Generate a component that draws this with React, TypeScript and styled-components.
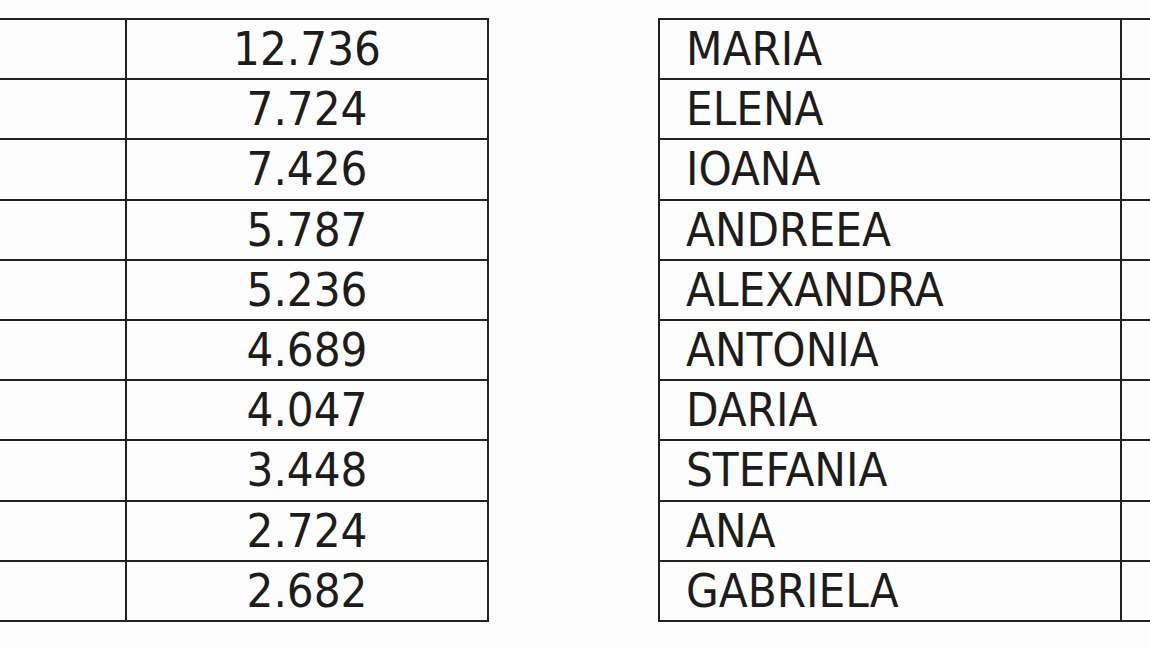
import { createGlobalStyle } from "styled-components";
import styled from "styled-components";

const GlobalStyle = createGlobalStyle`
  html, body {
    margin: 0;
    padding: 0;
    background: #fdfdfd;
    overflow: hidden;
  }
`;

const StyledPage = styled.div`
  display: flex;
  align-items: flex-start;
  gap: 169px;
  width: 1150px;
  height: 647px;
  padding-top: 18px;
  box-sizing: border-box;
  overflow: hidden;
  font-family: "DejaVu Sans Condensed", "DejaVu Sans", Verdana, sans-serif;
  font-stretch: condensed;
  color: #1c1c1c;
`;

const StyledTable = styled.div<{ columns: string; offset?: number }>`
  display: grid;
  grid-template-columns: ${({ columns }) => columns};
  border-top: 2px solid #222;
  border-left: 2px solid #222;
  margin-left: ${({ offset }) => offset || 0}px;
  flex-shrink: 0;
`;

const StyledCell = styled.div<{ align?: "left" | "center" }>`
  height: 58.2px;
  line-height: 58px;
  border-right: 2px solid #222;
  border-bottom: 2px solid #222;
  font-size: 47px;
  text-align: ${({ align }) => align || "left"};
  padding: ${({ align }) => (align === "center" ? "0" : "0 0 0 26px")};
  white-space: nowrap;
  overflow: hidden;
`;

const counts = [
  "12.736",
  "7.724",
  "7.426",
  "5.787",
  "5.236",
  "4.689",
  "4.047",
  "3.448",
  "2.724",
  "2.682",
];

const names = [
  "MARIA",
  "ELENA",
  "IOANA",
  "ANDREEA",
  "ALEXANDRA",
  "ANTONIA",
  "DARIA",
  "STEFANIA",
  "ANA",
  "GABRIELA",
];

export default function App() {
  return (
    <>
      <GlobalStyle />
      <StyledPage>
        <StyledTable columns="227px 362px" offset={-102}>
          {counts.map((count) => (
            <>
              <StyledCell key={count + "-name"} />
              <StyledCell key={count} align="center">
                {count}
              </StyledCell>
            </>
          ))}
        </StyledTable>
        <StyledTable columns="462px 200px">
          {names.map((name) => (
            <>
              <StyledCell key={name}>{name}</StyledCell>
              <StyledCell key={name + "-count"} />
            </>
          ))}
        </StyledTable>
      </StyledPage>
    </>
  );
}
